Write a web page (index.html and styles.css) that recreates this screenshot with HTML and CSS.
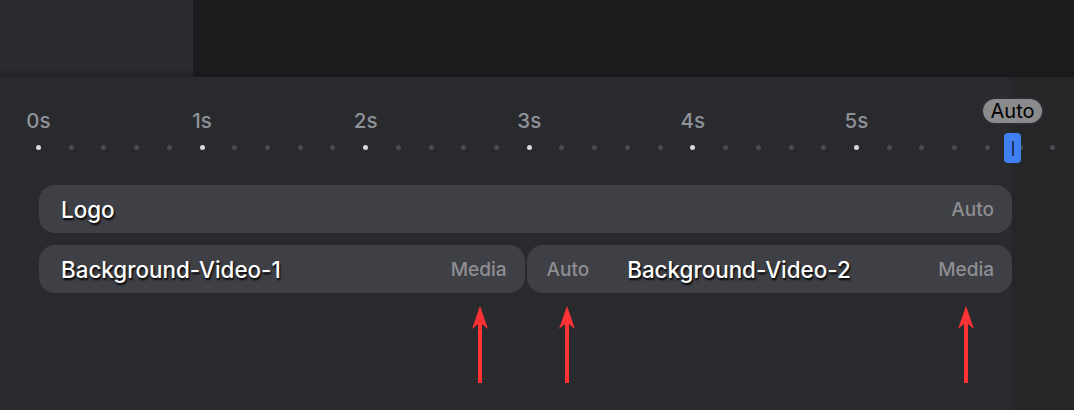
FILE: index.html
```html
<!DOCTYPE html>
<html>
<head lang="en">
    <meta charset="UTF-8">
    <title>Timeline</title>
    <link rel="stylesheet" href="styles.css">
</head>
<body>
<div id="top">
    <div class="top-left"></div>
    <div class="top-right"></div>
</div>
<div id="timeline">
    <div class="ruler">
        <div class="labels">
            <div class="sec"><span>0s</span></div>
            <div class="sec"><span>1s</span></div>
            <div class="sec"><span>2s</span></div>
            <div class="sec"><span>3s</span></div>
            <div class="sec"><span>4s</span></div>
            <div class="sec"><span>5s</span></div>
        </div>
        <div class="dots">
            <i class="major"></i><i></i><i></i><i></i><i></i>
            <i class="major"></i><i></i><i></i><i></i><i></i>
            <i class="major"></i><i></i><i></i><i></i><i></i>
            <i class="major"></i><i></i><i></i><i></i><i></i>
            <i class="major"></i><i></i><i></i><i></i><i></i>
            <i class="major"></i><i></i><i></i><i></i><i></i>
            <i></i><i></i>
        </div>
        <div class="badge">Auto</div>
        <div class="playhead"><b></b></div>
    </div>
    <div class="tracks">
        <div class="row">
            <div class="clip">
                <span class="name">Logo</span>
                <span class="meta">Auto</span>
            </div>
        </div>
        <div class="row">
            <div class="clip">
                <span class="name">Background-Video-1</span>
                <span class="meta">Media</span>
            </div>
            <div class="clip">
                <span class="meta lead">Auto</span>
                <span class="name">Background-Video-2</span>
                <span class="meta">Media</span>
            </div>
        </div>
    </div>
    <!-- annotation arrows -->
    <svg class="arrow a1" width="16" height="78" viewBox="0 0 16 78"><path d="M8 0 L16 23 L10 18 L10 77 L6 77 L6 18 L0 23 Z" fill="#ff3333"/></svg>
    <svg class="arrow a2" width="16" height="78" viewBox="0 0 16 78"><path d="M8 0 L16 23 L10 18 L10 77 L6 77 L6 18 L0 23 Z" fill="#ff3333"/></svg>
    <svg class="arrow a3" width="16" height="78" viewBox="0 0 16 78"><path d="M8 0 L16 23 L10 18 L10 77 L6 77 L6 18 L0 23 Z" fill="#ff3333"/></svg>
</div>
</body>
</html>
```

FILE: styles.css
```css
*{
    margin: 0px;
    padding: 0px;
    box-sizing: border-box;
}
body{
    width: 1074px;
    height: 410px;
    overflow: hidden;
    background: #292a2e;
    font-family: Inter, "Liberation Sans", sans-serif;
}
#top{
    display: flex;
    height: 77px;
}
.top-left{
    width: 193px;
    background: linear-gradient(to bottom, #2b2c30 66px, #232427 77px);
}
.top-right{
    flex: 1;
    background: linear-gradient(to bottom, #1b1c1e 70px, #18191b 77px);
}
#timeline{
    position: relative;
    height: 333px;
    background: linear-gradient(to right, #292a2e 1012px, #252628 1012px);
}
.ruler{
    position: relative;
    padding: 30px 0px 0px 22.14px;
}
.labels{
    display: flex;
    height: 27px;
}
.sec{
    width: 163.6px;
    flex: none;
}
.sec span{
    display: block;
    width: 32.72px;
    text-align: center;
    line-height: 27px;
    font-size: 20.5px;
    font-weight: 500;
    color: #8e9298;
}
.dots{
    display: flex;
    align-items: center;
    height: 27px;
}
.dots i{
    display: flex;
    justify-content: center;
    width: 32.72px;
    flex: none;
}
.dots i::after{
    content: "";
    width: 5px;
    height: 5px;
    border-radius: 50%;
    background: #4a4c51;
}
.dots i.major::after{
    background: #d9d9dc;
}
.badge{
    position: absolute;
    left: 981px;
    top: 20px;
    width: 63px;
    height: 28px;
    line-height: 24px;
    border: 2px solid #2d2e31;
    border-radius: 14px;
    background: #8b8b8d;
    color: #000;
    font-size: 20px;
    text-align: center;
}
.playhead{
    position: absolute;
    left: 1004px;
    top: 56px;
    width: 17px;
    height: 30px;
    border-radius: 4px;
    background: #3f7ff0;
    display: flex;
    justify-content: center;
    align-items: center;
}
.playhead b{
    width: 2px;
    height: 15px;
    background: #1d3566;
}
.tracks{
    display: flex;
    flex-direction: column;
    gap: 12px;
    margin: 24px 0px 0px 39px;
    width: 973px;
}
.row{
    display: flex;
    gap: 2px;
}
.clip{
    flex: 1;
    display: flex;
    align-items: center;
    height: 48px;
    padding: 0px 18px 0px 22px;
    border-radius: 16px;
    background: #3f4045;
}
.name{
    flex: 1;
    font-size: 22.4px;
    font-weight: 500;
    color: #fff;
    text-shadow: 1px 2px 2px #000;
}
.meta{
    font-size: 19px;
    font-weight: 500;
    color: #8e8e92;
}
.meta.lead{
    margin: 0px 38px 0px -2px;
}
.arrow{
    position: absolute;
    top: 229px;
}
.a1{ left: 472px; }
.a2{ left: 559px; }
.a3{ left: 958px; }
```
